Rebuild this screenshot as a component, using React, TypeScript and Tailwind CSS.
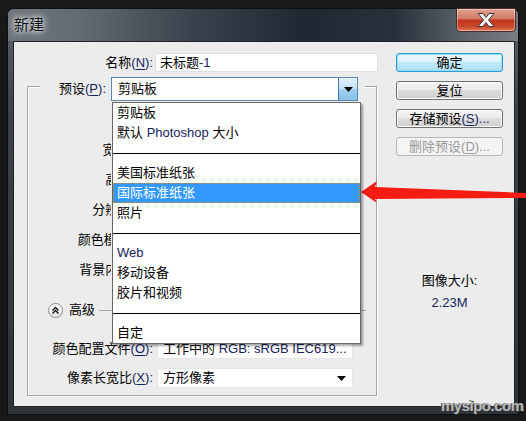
import React from 'react';

const latin = 'text-[#16245c]';

function Mn({ label, k, tail = ':' }: { label: string; k: string; tail?: string }) {
  return (
    <span className="whitespace-nowrap">
      {label}
      <span className={latin}>
        (<span className="underline underline-offset-[2px]">{k}</span>){tail}
      </span>
    </span>
  );
}

function Tri() {
  return (
    <svg width="9" height="5" viewBox="0 0 9 5">
      <path d="M0 0 H9 L4.5 5 Z" fill="#000" />
    </svg>
  );
}

function DlgButton({ children, kind = 'normal' }: { children: React.ReactNode; kind?: 'default' | 'normal' | 'disabled' }) {
  const styles = {
    default:
      'border-[#2f9ad8] bg-[linear-gradient(#ecf8fe,#dcf2fd_50%,#c3e8fb_50%,#aedcf5)] shadow-[inset_0_0_0_1px_#8fe0fb] text-black',
    normal:
      'border-[#707070] bg-[linear-gradient(#f4f4f4,#ebebeb_50%,#dddddd_50%,#cfcfcf)] shadow-[inset_0_0_0_1px_#fcfcfc] text-black',
    disabled: 'border-[#b4b8bb] bg-[#f4f4f4] text-[#9a9a9a]',
  };
  return (
    <div className={`flex h-[19px] w-[107px] items-center justify-center rounded-[3px] border ${styles[kind]}`}>
      {children}
    </div>
  );
}

const presets: (string | null)[] = [
  '剪贴板',
  'PS',
  null,
  '美国标准纸张',
  '国际标准纸张',
  '照片',
  null,
  'Web',
  '移动设备',
  '胶片和视频',
  null,
  '自定',
];

function PresetList() {
  return (
    <div className="absolute left-0 top-[24px] z-10 w-[249px] border border-[#666] bg-white shadow-[2px_2px_2px_rgba(0,0,0,0.35)]">
      {presets.map((p, i) => {
        if (p === null) {
          return (
            <div key={i} className="flex h-[20px] items-center">
              <div className="h-px w-full bg-black" />
            </div>
          );
        }
        const active = p === '国际标准纸张';
        return (
          <div
            key={i}
            className={`flex h-[20px] items-center pl-[4px] ${
              active ? 'bg-[#3399ff] text-white outline-1 outline-dotted outline-[#c9873e] -outline-offset-1' : 'text-black'
            }`}
          >
            {p === 'PS' ? (
              <span>
                默认 <span className={latin}>Photoshop</span> 大小
              </span>
            ) : p === 'Web' ? (
              <span className={latin}>Web</span>
            ) : (
              p
            )}
          </div>
        );
      })}
    </div>
  );
}

// rows whose fields sit under the open preset list: only the part left of the list shows
function HiddenRow({ label, k }: { label: string; k: string }) {
  return (
    <div className="flex h-[20px] items-center">
      <div className="w-[83px] overflow-hidden">
        <div className="w-[125px] text-right">
          <Mn label={label} k={k} />
        </div>
      </div>
    </div>
  );
}

function FormRow({ label, k, children }: { label: string; k: string; children?: React.ReactNode }) {
  return (
    <div className="flex h-[20px] items-center">
      <div className="w-[125px] text-right">
        <Mn label={label} k={k} />
      </div>
      {children}
    </div>
  );
}

export default function App() {
  return (
    <div className="relative h-[421px] w-[526px] overflow-hidden bg-[#181818] pl-[7px] pt-[8px] text-[13px] leading-[16px] text-black [font-family:'Liberation_Sans','Noto_Sans_CJK_SC',sans-serif]">
      <div className="flex h-[407px] w-[512px] flex-col rounded-t-[7px] border border-[#0d0f11] bg-[linear-gradient(180deg,#60666d,#3c4249_25%,#2e343a)] shadow-[inset_0_1px_0_#9aa0a6]">
        {/* title bar */}
        <div className="flex h-[32px] rounded-t-[6px] bg-[linear-gradient(90deg,#6f757c_0%,#646a71_14%,#3a424b_36%,#1f2832_58%,#28303a_76%,#5f656b_90%,#787d83_100%)]">
          <span className="ml-[6px] mt-[8px] text-[15px] leading-[16px] text-[#111] [text-shadow:0_0_6px_#dde2e6,0_0_3px_#dde2e6,0_0_10px_#c9ced2]">
            新建
          </span>
          <div className="ml-auto mr-[2px] -mt-px flex h-[24px] w-[60px] items-center justify-center rounded-b-[4px] border border-[#4a2f2c] bg-[linear-gradient(#e2a394,#d17763_45%,#c0351c_50%,#c9472c_80%,#e07d5c)] shadow-[inset_0_0_0_1px_rgba(255,255,255,0.35)]">
            <svg width="22" height="16" viewBox="0 0 22 16">
              <path
                d="M3 1.5 L8 1.5 L11 5.5 L14 1.5 L19 1.5 L13.5 8 L19 14.5 L14 14.5 L11 10.5 L8 14.5 L3 14.5 L8.5 8 Z"
                fill="#f4f4f4"
                stroke="#3b3b3b"
                strokeWidth="1"
                strokeLinejoin="round"
              />
            </svg>
          </div>
        </div>

        {/* client */}
        <div className="ml-[5px] flex h-[366px] w-[502px] border border-[#1f2429] bg-[#ececec]">
          <div className="w-[382px]">
            {/* name */}
            <div className="mt-[11px] flex h-[19px] items-center">
              <div className="w-[139px] text-right">
                <Mn label="名称" k="N" />
              </div>
              <div className="ml-[2px] flex h-[19px] w-[223px] items-center border border-[#dde1e5] bg-white pl-[4px]">
                未标题<span className={latin}>-1</span>
              </div>
            </div>

            {/* group box */}
            <div className="ml-[13px] mt-[14px] h-[310px] w-[350px] border border-[#a6a6a6] shadow-[inset_1px_1px_0_#fff,1px_1px_0_#fff]">
              <div className="-mt-[10px] ml-[12px] flex h-[24px] w-[325px] items-center bg-[#ececec]">
                <div className="w-[66px] text-right">
                  <Mn label="预设" k="P" />
                </div>
                <div className="relative ml-[5px] flex h-[24px] w-[247px] items-center border border-[#5d87b3] bg-white pl-[6px]">
                  <span className="flex-1">剪贴板</span>
                  <div className="flex h-full w-[19px] items-center justify-center border-l border-[#3d7bad] bg-[linear-gradient(#e3f2fb,#bfe1f4_50%,#9fd0ec_50%,#86c2e6)]">
                    <Tri />
                  </div>
                  <PresetList />
                </div>
              </div>

              <div className="mt-[39px] flex flex-col gap-[10px]">
                <HiddenRow label="宽度" k="W" />
                <HiddenRow label="高度" k="H" />
                <HiddenRow label="分辨率" k="R" />
                <HiddenRow label="颜色模式" k="M" />
                <HiddenRow label="背景内容" k="C" />
              </div>

              <div className="mt-[20px] flex h-[20px] items-center">
                <div className="ml-[20px] flex h-[15px] w-[15px] items-center justify-center rounded-full border border-[#8c8c8c] bg-[linear-gradient(#ffffff,#e6e6e6)]">
                  <svg width="9" height="9" viewBox="0 0 9 9">
                    <path d="M1.5 4.5 L4.5 1.5 L7.5 4.5 M1.5 7.5 L4.5 4.5 L7.5 7.5" fill="none" stroke="#111" strokeWidth="1.4" />
                  </svg>
                </div>
                <span className="ml-[6px]">高级</span>
                <div className="ml-[4px] mr-[10px] h-px flex-1 bg-[#a6a6a6]" />
              </div>

              <div className="mt-[19px]">
                <FormRow label="颜色配置文件" k="O">
                  <div className="ml-[4px] flex h-[20px] w-[196px] items-center rounded-[2px] border border-[#e6e6e6] bg-white pl-[5px] pr-[6px]">
                    <span className="flex-1 whitespace-nowrap">
                      工作中的 <span className={latin}>RGB: sRGB IEC619...</span>
                    </span>
                    <Tri />
                  </div>
                </FormRow>
              </div>
              <div className="mt-[9px]">
                <FormRow label="像素长宽比" k="X">
                  <div className="ml-[4px] flex h-[20px] w-[196px] items-center rounded-[2px] border border-[#e6e6e6] bg-white pl-[5px] pr-[6px]">
                    <span className="flex-1">方形像素</span>
                    <Tri />
                  </div>
                </FormRow>
              </div>
            </div>
          </div>

          {/* right column */}
          <div className="mt-[11px] flex w-[107px] flex-col">
            <div className="flex flex-col gap-[9px]">
              <DlgButton kind="default">确定</DlgButton>
              <DlgButton>复位</DlgButton>
              <DlgButton>
                <Mn label="存储预设" k="S" tail="..." />
              </DlgButton>
              <DlgButton kind="disabled">
                <span>
                  删除预设(<span className="underline underline-offset-[2px]">D</span>)...
                </span>
              </DlgButton>
            </div>
            <div className="mt-[117px] text-center">图像大小:</div>
            <div className={`mt-[6px] text-center ${latin}`}>2.23M</div>
          </div>
        </div>
      </div>

      {/* red pointer arrow */}
      <svg className="pointer-events-none absolute left-0 top-0" width="526" height="421" viewBox="0 0 526 421">
        <polygon points="361,192 377,181 375,187 526,193 526,198 375,199 377,203" fill="#f51c14" />
      </svg>

      {/* watermark */}
      <div className="absolute left-[441px] top-[397px] text-[15px] font-bold leading-[18px] tracking-[-0.5px] text-[#b9b9b9] [text-shadow:1px_1px_0_#333,-1px_0_0_#555]">
        mysipo.com
      </div>
    </div>
  );
}
